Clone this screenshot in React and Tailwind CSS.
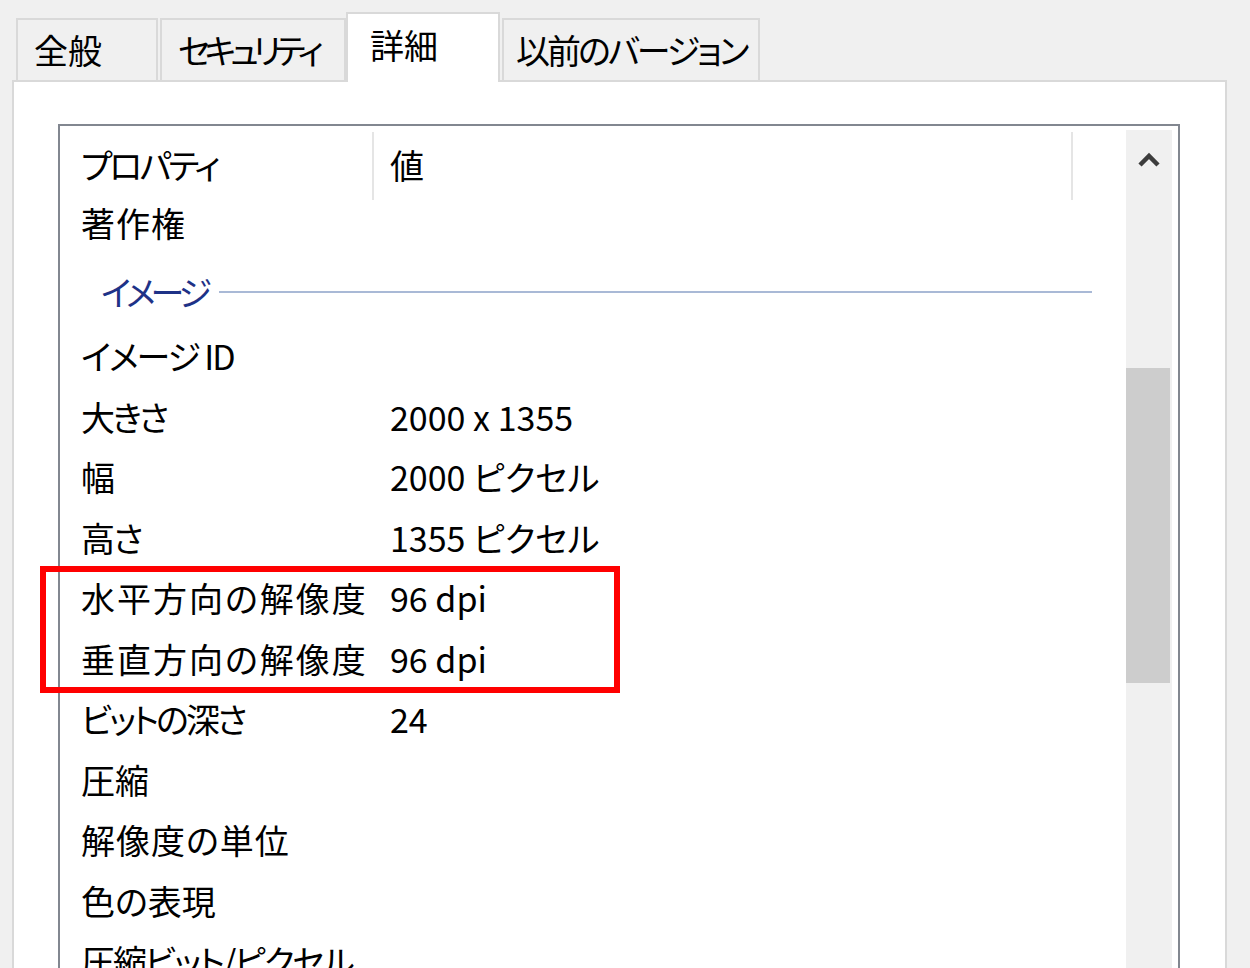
import React from "react";

const font = "font-['Noto_Sans_CJK_JP','Noto_Sans',sans-serif] [font-feature-settings:'palt']";

const tabs = [
  { label: "全般", w: "w-[142px]", ml: "ml-[16px]", pl: "pl-[16px]", tr: "" },
  { label: "セキュリティ", w: "w-[186px]", ml: "ml-[2px]", pl: "pl-[16px]", tr: "tracking-[-6px]" },
  { label: "詳細", w: "w-[154px]", ml: "ml-0", pl: "pl-[22px]", tr: "", active: true },
  { label: "以前のバージョン", w: "w-[258px]", ml: "ml-[2px]", pl: "pl-[12px]", tr: "tracking-[-3px]" },
];

const rows = [
  ["イメージ ID", "", "tracking-[-2px]"],
  ["大きさ", "2000 x 1355", "tracking-[-3px]"],
  ["幅", "2000 ピクセル", ""],
  ["高さ", "1355 ピクセル", "tracking-[-2px]"],
  ["水平方向の解像度", "96 dpi", "tracking-[2px]"],
  ["垂直方向の解像度", "96 dpi", "tracking-[2px]"],
  ["ビットの深さ", "24", "tracking-[-3px]"],
  ["圧縮", "", ""],
  ["解像度の単位", "", "tracking-[1px]"],
  ["色の表現", "", ""],
  ["圧縮ビット/ピクセル", "", "tracking-[-2px]"],
];

function Tab({ tab }) {
  if (tab.active) {
    return (
      <div
        className={`relative z-10 -mb-[2px] flex h-[70px] items-center whitespace-nowrap border-2 border-b-0 border-[#d9d9d9] bg-white pb-[6px] ${tab.w} ${tab.ml} ${tab.pl}`}
      >
        {tab.label}
      </div>
    );
  }
  return (
    <div
      className={`flex h-[62px] items-center whitespace-nowrap border-2 border-b-0 border-[#d9d9d9] bg-[#f0f0f0] ${tab.w} ${tab.ml} ${tab.pl} ${tab.tr}`}
    >
      {tab.label}
    </div>
  );
}

function Row({ name, value, tr }) {
  return (
    <div className="flex h-[60.5px] items-center">
      <div className={`w-[326px] shrink-0 whitespace-nowrap pl-[17px] ${tr}`}>{name}</div>
      <div className="whitespace-nowrap">{value}</div>
    </div>
  );
}

export default function App() {
  return (
    <div className={`relative h-[968px] w-[1250px] overflow-hidden bg-[#f0f0f0] text-[34px] leading-none text-black ${font}`}>
      {/* tab strip */}
      <div className="flex items-end pt-[12px]">
        {tabs.map((t) => (
          <Tab key={t.label} tab={t} />
        ))}
      </div>

      {/* tab page */}
      <div className="ml-[12px] h-[900px] w-[1215px] border-2 border-b-0 border-[#d9d9d9] bg-white pl-[44px] pt-[42px]">
        <div className="flex h-[860px] w-[1122px] border-2 border-b-0 border-[#828790] bg-white p-[4px] pb-0">
          {/* list content */}
          <div className="flex-1">
            {/* header */}
            <div className="flex h-[70px] items-center">
              <div className="flex h-full w-[308px] items-center pl-[17px] tracking-[-3px]">プロパティ</div>
              <div className="mt-[2px] h-[68px] w-[2px] bg-[#e5e5e5]" />
              <div className="flex h-full w-[697px] items-center pl-[16px]">値</div>
              <div className="mt-[2px] h-[68px] w-[2px] bg-[#e5e5e5]" />
            </div>

            <div className="flex h-[46px] items-center pl-[17px] tracking-[1px]">著作権</div>

            {/* group header */}
            <div className="flex h-[80px] items-center pt-[12px] pl-[37px] pr-[34px]">
              <span className="whitespace-nowrap tracking-[-5px] text-[#1e3287]">イメージ</span>
              <div className="ml-[12px] h-[2px] flex-1 bg-[#a9b9d6]" />
            </div>

            {rows.map(([n, v, tr]) => (
              <Row key={n} name={n} value={v} tr={tr} />
            ))}
          </div>

          {/* scrollbar */}
          <div className="mr-[2px] flex w-[46px] flex-col bg-[#f0f0f0]">
            <div className="flex h-[56px] items-center justify-center pt-[4px]">
              <svg width="24" height="16" viewBox="0 0 24 16">
                <polyline
                  points="3,13 12,4 21,13"
                  fill="none"
                  stroke="#3c3c3c"
                  strokeWidth="4.5"
                  strokeLinejoin="miter"
                />
              </svg>
            </div>
            <div className="h-[182px]" />
            <div className="mr-[2px] h-[315px] bg-[#cdcdcd]" />
          </div>
        </div>
      </div>

      {/* red highlight annotation */}
      <div className="absolute left-[40px] top-[566px] h-[127px] w-[580px] border-[6px] border-[#ff0000]" />
    </div>
  );
}
